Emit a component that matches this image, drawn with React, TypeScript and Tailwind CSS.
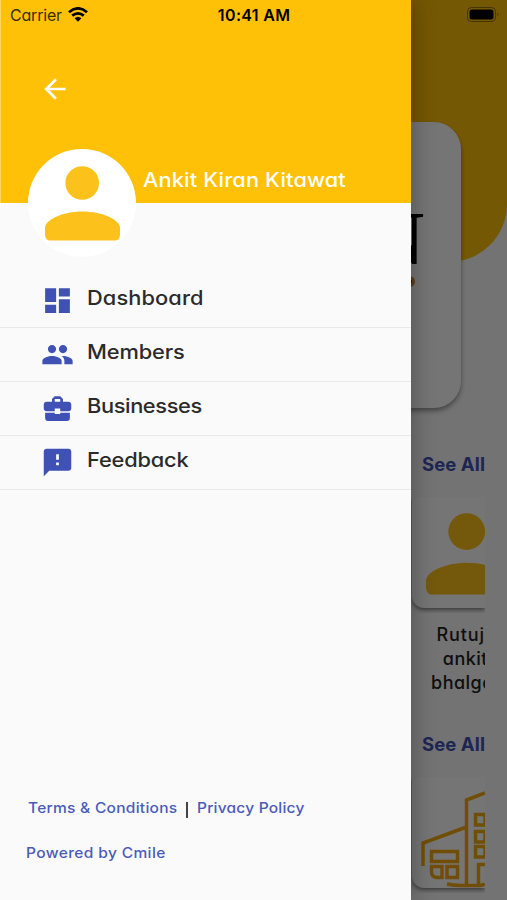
import React from 'react';
import { MdArrowBack, MdBusinessCenter, MdDashboard, MdFeedback, MdPeople } from 'react-icons/md';

const menuItems = [
  { label: 'Dashboard', icon: MdDashboard, tracking: 'tracking-[0.1px]' },
  { label: 'Members', icon: MdPeople, tracking: 'tracking-[-0.1px]' },
  { label: 'Businesses', icon: MdBusinessCenter, tracking: 'tracking-[-0.350px]' },
  { label: 'Feedback', icon: MdFeedback, tracking: 'tracking-[-0.150px]' },
];

function Person({ className }: { className: string }) {
  return (
    <svg viewBox="0 0 75 75" className={className} fill="#fcc21b">
      <circle cx="37.2" cy="17" r="16.800" />
      <path d="M0 62C0 54 17 45.500 37.500 45.500S75 54 75 62V68C75 71 73.500 74.500 70.500 74.500H4.500C1.500 74.500 0 71 0 68Z" />
    </svg>
  );
}

function Building() {
  return (
    <svg viewBox="0 0 64 97" className="h-[97px] w-[64px] shrink-0" fill="none" stroke="#f5aa10" strokeWidth="3.500">
      <path d="M2 75V52L45.500 36M45.500 94V9L64 2" />
      <rect x="10.500" y="60.500" width="26" height="10" />
      <path d="M10.500 75.500H21V86.500H16Q10.500 86 10.500 81ZM26 75.500H36.500V86.500H26Z" />
      <path d="M54.500 23.500H64V34H54.500ZM54.500 40.500H64V51H54.500ZM54.500 55.500H64V66H54.500ZM64 73.500H57.500V93M26 93Q32 94.500 40 94.500H57Q62 94.500 64 93" />
    </svg>
  );
}

function HomePage() {
  return (
    <div className="flex h-full w-full flex-col bg-[#fafafa]">
      <div className="flex h-[262px] shrink-0 rounded-br-[58px] bg-[#ffc107] pt-[122px]">
        <div className="flex h-[286px] w-[461px] shrink-0 flex-col items-end rounded-r-[27px] bg-white pr-[37px] pt-[78px] shadow-[0_3px_5px_rgba(0,0,0,0.4)]">
          <span className="font-['Liberation_Serif',serif] text-[77px] font-bold leading-[77px] text-black">N</span>
          <span className="mr-[9px] mt-[-1px] h-[11px] w-[11px] rounded-full border-[3px] border-[#d08a40] bg-[#4b2a0a]" />
        </div>
      </div>

      <div className="flex w-[485px] flex-col overflow-hidden pt-[190px] text-[#212121]">
        <div className="flex h-6 items-center justify-end pt-px text-[18.500px] font-bold tracking-[0.1px] text-[#3f51b5]">See All</div>
        <div className="mt-[21px] flex h-[116px] justify-end overflow-hidden">
          <div className="flex h-[111px] w-[73px] shrink-0 rounded-bl-[12px] bg-white pl-[14px] pt-[16px] shadow-[0_2px_4px_rgba(0,0,0,0.5)]">
            <Person className="h-[82px] w-[82px] shrink-0" />
          </div>
        </div>
        <div className="mt-[10px] flex flex-col items-end whitespace-nowrap text-[18px] font-medium leading-6 tracking-[0.5px]">
          <span className="tracking-[0.9px]">Rutuj</span>
          <span className="mr-[-3px]">ankit</span>
          <span className="w-[54px]">bhalga</span>
        </div>
        <div className="mt-[37px] flex h-6 items-center justify-end pt-px text-[18.500px] font-bold tracking-[0.1px] text-[#3f51b5]">See All</div>
        <div className="mt-[21px] flex h-[116px] justify-end overflow-hidden">
          <div className="flex h-[111px] w-[73px] shrink-0 rounded-bl-[12px] bg-white pl-[9px] pt-[14px] shadow-[0_2px_4px_rgba(0,0,0,0.5)]">
            <Building />
          </div>
        </div>
      </div>
    </div>
  );
}

function Drawer() {
  return (
    <aside className="absolute inset-y-0 left-0 flex w-[411px] flex-col bg-[#fafafa] shadow-[4px_0_20px_rgba(0,0,0,0.25)]">
      <div className="flex h-[203px] shrink-0 flex-col border-l border-[#ffd65c] bg-[#ffc107]">
        <button className="ml-[38px] mt-[73px] h-8 w-8 text-white">
          <MdArrowBack size={32} />
        </button>
        <div className="ml-[27px] mt-[44px] flex items-start">
          <div className="flex h-[108px] w-[108px] shrink-0 justify-center rounded-full bg-white pt-[17px]">
            <Person className="h-[75px] w-[75px]" />
          </div>
          <span className="ml-[7px] mt-[18px] origin-left scale-x-[1.085] whitespace-nowrap text-[20px] font-medium leading-[26px] tracking-[0.150px] text-white">
            Ankit Kiran Kitawat
          </span>
        </div>
      </div>

      <nav className="mt-[71px] flex flex-col">
        {menuItems.map(({ label, icon: Icon, tracking }) => (
          <a key={label} className="flex h-[54px] items-center border-b border-[#e9e9e9] pl-[41px] text-[#2b2b2b]">
            <Icon size={33} className="text-[#3f51b5]" />
            <span className={`mb-[5px] ml-[13px] origin-left scale-x-[1.09] text-[20px] font-medium ${tracking}`}>{label}</span>
          </a>
        ))}
      </nav>

      <footer className="mt-auto flex flex-col pb-[37px] text-[14.500px] font-medium leading-5 text-[#4a5bba]">
        <div className="flex pl-[28px]">
          <a className="w-[150px] origin-left scale-x-[1.07] whitespace-nowrap tracking-[0.25px]">Terms &amp; Conditions</a>
          <span className="ml-[8px] mt-[4px] h-[16px] w-[1.500px] bg-[#444]" />
          <a className="ml-[9px] origin-left scale-x-[1.07] whitespace-nowrap tracking-[0.2px]">Privacy Policy</a>
        </div>
        <a className="mt-[25px] ml-[26px] origin-left scale-x-[1.07] tracking-[0.35px]">Powered by Cmile</a>
      </footer>
    </aside>
  );
}

function StatusBar() {
  return (
    <div className="absolute inset-x-0 top-0 flex h-[30px] items-center pl-[10px] pr-[7px] text-[16px] text-black">
      <span className="tracking-[-0.2px] text-[#3b2d05]">Carrier</span>
      <svg viewBox="0 0 20 15" className="mb-px ml-[6px] h-[15px] w-[20px]" fill="none" stroke="#000" strokeWidth="2.800">
        <path d="M1 5.200Q10-2.400 19 5.200M4.200 8.700Q10 4 15.800 8.700" />
        <path d="M6.600 11.300Q10 8.200 13.400 11.300L10 14.800Z" fill="#000" stroke="none" />
      </svg>
      <span className="ml-[130px] font-semibold tracking-[0.35px] whitespace-nowrap">10:41 AM</span>
      <svg viewBox="0 0 33 16" className="ml-auto h-[16px] w-[33px]">
        <rect x="0.500" y="0.500" width="28" height="14" rx="4" fill="none" stroke="#000" strokeOpacity="0.4" />
        <rect x="2.500" y="2.500" width="24" height="10" rx="2.500" />
        <path d="M30.500 5.500Q32.500 7.500 30.500 9.500Z" fillOpacity="0.4" />
      </svg>
    </div>
  );
}

export default function App() {
  return (
    <div className="relative h-[900px] w-[507px] overflow-hidden font-['Inter',sans-serif] [font-feature-settings:'cv11']">
      <HomePage />
      <div className="absolute inset-0 bg-black/54" />
      <Drawer />
      <StatusBar />
    </div>
  );
}
